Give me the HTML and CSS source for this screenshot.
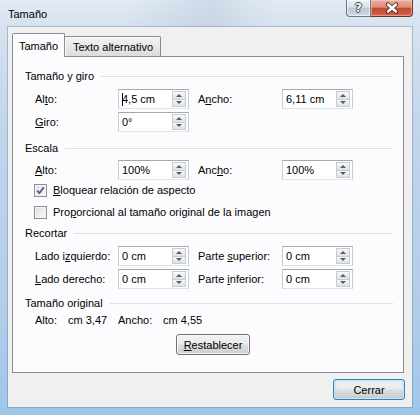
FILE: index.html
```html
<!DOCTYPE html>
<html lang="es">
<head>
<meta charset="utf-8">
<title>Tamaño</title>
<link rel="stylesheet" href="styles.css">
</head>
<body>
<div class="window">
  <div class="titlebar">
    <span class="title">Tamaño</span>
    <div class="caption">
      <div class="cap-help"><span>?</span></div>
      <div class="cap-close">
        <svg width="18" height="12" viewBox="0 0 18 12">
          <path d="M5 2.5 L13 9.5 M13 2.5 L5 9.5" stroke="#4a2a24" stroke-width="4.2" stroke-linecap="round" fill="none"/>
          <path d="M5 2.5 L13 9.5 M13 2.5 L5 9.5" stroke="#ffffff" stroke-width="2.4" stroke-linecap="round" fill="none"/>
        </svg>
      </div>
    </div>
  </div>
  <div class="client">
    <div class="tabs">
      <div class="tab tab-active">Tamaño</div>
      <div class="tab tab-idle">Texto alternativo</div>
    </div>
    <div class="panel">
      <div class="ghead m11"><span>Tamaño y giro</span></div>
      <div class="row m5">
        <span class="lbl">Al<u>t</u>o:</span>
        <div class="spin"><span class="val"><span class="caret"></span>4,5 cm</span><span class="arrows"><i class="up"></i><i class="down"></i></span></div>
        <span class="lbl lbl2">A<u>n</u>cho:</span>
        <div class="spin"><span class="val">6,11 cm</span><span class="arrows"><i class="up"></i><i class="down"></i></span></div>
      </div>
      <div class="row m3">
        <span class="lbl"><u>G</u>iro:</span>
        <div class="spin"><span class="val">0°</span><span class="arrows"><i class="up"></i><i class="down"></i></span></div>
      </div>

      <div class="ghead m8"><span>Escala</span></div>
      <div class="row m4">
        <span class="lbl"><u>A</u>lto:</span>
        <div class="spin"><span class="val">100%</span><span class="arrows"><i class="up"></i><i class="down"></i></span></div>
        <span class="lbl lbl2">Anc<u>h</u>o:</span>
        <div class="spin"><span class="val">100%</span><span class="arrows"><i class="up"></i><i class="down"></i></span></div>
      </div>
      <div class="check">
        <span class="box"><svg width="11" height="11" viewBox="0 0 11 11"><path d="M2.2 5.6 L4.4 8.2 L8.8 2.4" stroke="#4b5f99" stroke-width="1.8" fill="none" stroke-linejoin="round"/></svg></span>
        <span><u>B</u>loquear relación de aspecto</span>
      </div>
      <div class="check m2">
        <span class="box"></span>
        <span>Pro<u>p</u>orcional al tamaño original de la imagen</span>
      </div>

      <div class="ghead m3"><span>Recortar</span></div>
      <div class="row m5">
        <span class="lbl">Lado i<u>z</u>quierdo:</span>
        <div class="spin"><span class="val">0 cm</span><span class="arrows"><i class="up"></i><i class="down"></i></span></div>
        <span class="lbl lbl2">Parte <u>s</u>uperior:</span>
        <div class="spin"><span class="val">0 cm</span><span class="arrows"><i class="up"></i><i class="down"></i></span></div>
      </div>
      <div class="row m3">
        <span class="lbl"><u>L</u>ado derecho:</span>
        <div class="spin"><span class="val">0 cm</span><span class="arrows"><i class="up"></i><i class="down"></i></span></div>
        <span class="lbl lbl2">Parte <u>i</u>nferior:</span>
        <div class="spin"><span class="val">0 cm</span><span class="arrows"><i class="up"></i><i class="down"></i></span></div>
      </div>

      <div class="ghead m6"><span>Tamaño original</span></div>
      <div class="orig m1">
        <span class="o1">Alto:</span><span class="o2">cm 3,47</span><span class="o3">Ancho:</span><span>cm 4,55</span>
      </div>
      <div class="reset-row m6">
        <button class="btn btn-reset"><u>R</u>establecer</button>
      </div>
    </div>
    <div class="footer">
      <button class="btn btn-default">Cerrar</button>
    </div>
  </div>
</div>
</body>
</html>
```

FILE: styles.css
```css
* { box-sizing: border-box; }
html, body { margin: 0; padding: 0; }
body {
  width: 420px;
  height: 415px;
  overflow: hidden;
  font-family: "Liberation Sans", Arial, sans-serif;
  font-size: 11px;
  color: #000;
  background: #ffffff;
}
u { text-decoration: underline; text-underline-offset: 1px; }

.window {
  width: 420px;
  height: 415px;
  display: flex;
  flex-direction: column;
  background: linear-gradient(180deg, #e3ebf4 0px, #d6e2ef 26px, #c2d6ec 120px, #b3cdea 300px, #9fc6ea 415px);
}

.titlebar {
  height: 27px;
  display: flex;
  align-items: center;
  padding-left: 8px;
  background: linear-gradient(100deg, rgba(255,255,255,0.0) 30%, rgba(150,170,195,0.25) 50%, rgba(255,255,255,0.0) 65%);
}
.title { line-height: 14px; }
.caption {
  margin-left: auto;
  margin-right: 7px;
  align-self: flex-start;
  display: flex;
  height: 17px;
}
.cap-help {
  width: 25px;
  height: 17px;
  border: 1px solid #6b7888;
  border-top: none;
  border-radius: 0 0 0 4px;
  background: linear-gradient(180deg, #eef2f6 0%, #d8e0e9 45%, #bcc8d6 50%, #cfd9e4 100%);
  box-shadow: inset 0 0 0 1px rgba(255,255,255,0.6);
  display: flex;
  align-items: center;
  justify-content: center;
}
.cap-help span {
  font-family: "DejaVu Sans", sans-serif;
  font-weight: bold;
  font-size: 12px;
  color: #f4f6f8;
  text-shadow: 1px 0 0 #454d58, -1px 0 0 #454d58, 0 1px 0 #454d58, 0 -1px 0 #454d58;
  line-height: 12px;
}
.cap-close {
  width: 42px;
  height: 17px;
  border: 1px solid #6b3127;
  border-left: none;
  border-top: none;
  border-radius: 0 0 4px 0;
  background: linear-gradient(180deg, #eab0a2 0%, #dc8a76 45%, #c7482f 52%, #d1634a 100%);
  box-shadow: inset 0 0 0 1px rgba(255,220,210,0.45);
  display: flex;
  align-items: center;
  justify-content: center;
}

.client {
  margin-left: 8px;
  width: 404px;
  height: 380px;
  background: #f0f0f0;
  box-shadow: 0 0 0 1px rgba(90,110,140,0.35);
  display: flex;
  flex-direction: column;
}

.tabs {
  margin-top: 6px;
  margin-left: 4px;
  height: 23px;
  display: flex;
  align-items: flex-end;
}
.tab {
  display: flex;
  align-items: center;
  justify-content: center;
  border: 1px solid #898c95;
  border-bottom: none;
  border-radius: 2px 2px 0 0;
}
.tab-active {
  width: 53px;
  height: 24px;
  margin-bottom: -1px;
  background: #fcfcfe;
  position: relative;
  z-index: 1;
}
.tab-idle {
  width: 97px;
  height: 20px;
  margin-left: -1px;
  padding-left: 1px;
  background: linear-gradient(180deg, #f2f2f2 0%, #e8e8e8 50%, #dcdcdc 100%);
  box-shadow: inset 1px 1px 0 #fbfbfb;
}

.panel {
  margin-left: 4px;
  width: 392px;
  height: 317px;
  border: 1px solid #898c95;
  background: #fcfcfe;
  display: flex;
  flex-direction: column;
}

.m1 { margin-top: 1px; }
.m2 { margin-top: 2px; }
.m3 { margin-top: 3px; }
.m4 { margin-top: 4px; }
.m5 { margin-top: 5px; }
.m6 { margin-top: 6px; }
.m8 { margin-top: 8px; }
.m11 { margin-top: 11px; }

.ghead {
  height: 16px;
  display: flex;
  align-items: center;
  padding-left: 12px;
  margin-right: 10px;
  gap: 7px;
}
.ghead::after {
  content: "";
  flex: 1;
  height: 1px;
  background: #dbe0e5;
}

.row {
  height: 20px;
  display: flex;
  align-items: center;
  padding-left: 22px;
}
.lbl { width: 83px; }
.lbl2 { margin-left: 9px; width: 84px; }

.spin {
  width: 71px;
  height: 20px;
  display: flex;
  background: #fff;
  border: 1px solid;
  border-color: #a4a7ae #c9ccd3 #dde2e8 #c9ccd3;
}
.val {
  flex: 1;
  padding-left: 3px;
  line-height: 18px;
  display: flex;
  align-items: center;
}
.caret {
  display: inline-block;
  width: 1px;
  height: 13px;
  background: #000;
  margin-right: -1px;
}
.arrows {
  width: 14px;
  margin: 1px 2px 1px 0;
  display: flex;
  flex-direction: column;
}
.arrows i {
  flex: 1;
  border: 1px solid #c5ccd6;
  background: linear-gradient(180deg, #fafafa 0%, #ececec 50%, #e0e2e5 100%);
  display: flex;
  align-items: center;
  justify-content: center;
}
.arrows i + i { margin-top: -1px; }
.arrows i::after {
  content: "";
  width: 0;
  height: 0;
  border-left: 3px solid transparent;
  border-right: 3px solid transparent;
}
.arrows .up::after { border-bottom: 3px solid #4e5f78; }
.arrows .down::after { border-top: 3px solid #4e5f78; }

.check {
  height: 20px;
  display: flex;
  align-items: center;
  padding-left: 21px;
  gap: 6px;
}
.box {
  width: 13px;
  height: 13px;
  border: 1px solid #8f8f8f;
  background: linear-gradient(135deg, #dcdcdc 0%, #f0f0f0 60%, #fbfbfb 100%);
  box-shadow: inset 0 0 0 1px #f4f4f4;
  display: flex;
  align-items: center;
  justify-content: center;
}

.orig {
  height: 16px;
  display: flex;
  align-items: center;
  padding-left: 22px;
}
.o1 { width: 33px; }
.o2 { width: 50px; }
.o3 { width: 45px; }

.reset-row {
  display: flex;
  padding-left: 163px;
}
.btn {
  font-family: inherit;
  font-size: 11px;
  color: #000;
  padding: 0;
  border: 1px solid #707070;
  border-radius: 3px;
  background: linear-gradient(180deg, #f2f2f2 0%, #ebebeb 48%, #dddddd 52%, #cfcfcf 100%);
  box-shadow: inset 0 0 0 1px rgba(255,255,255,0.75);
}
.btn-reset {
  width: 74px;
  height: 21px;
}
.footer {
  display: flex;
  justify-content: flex-end;
  padding-right: 7px;
  margin-top: 6px;
}
.btn-default {
  width: 72px;
  height: 21px;
  border-color: #3c7fb1;
  box-shadow: inset 0 0 0 1px #c5e6f7, inset 0 0 3px 1px rgba(120,200,240,0.45);
}
```
